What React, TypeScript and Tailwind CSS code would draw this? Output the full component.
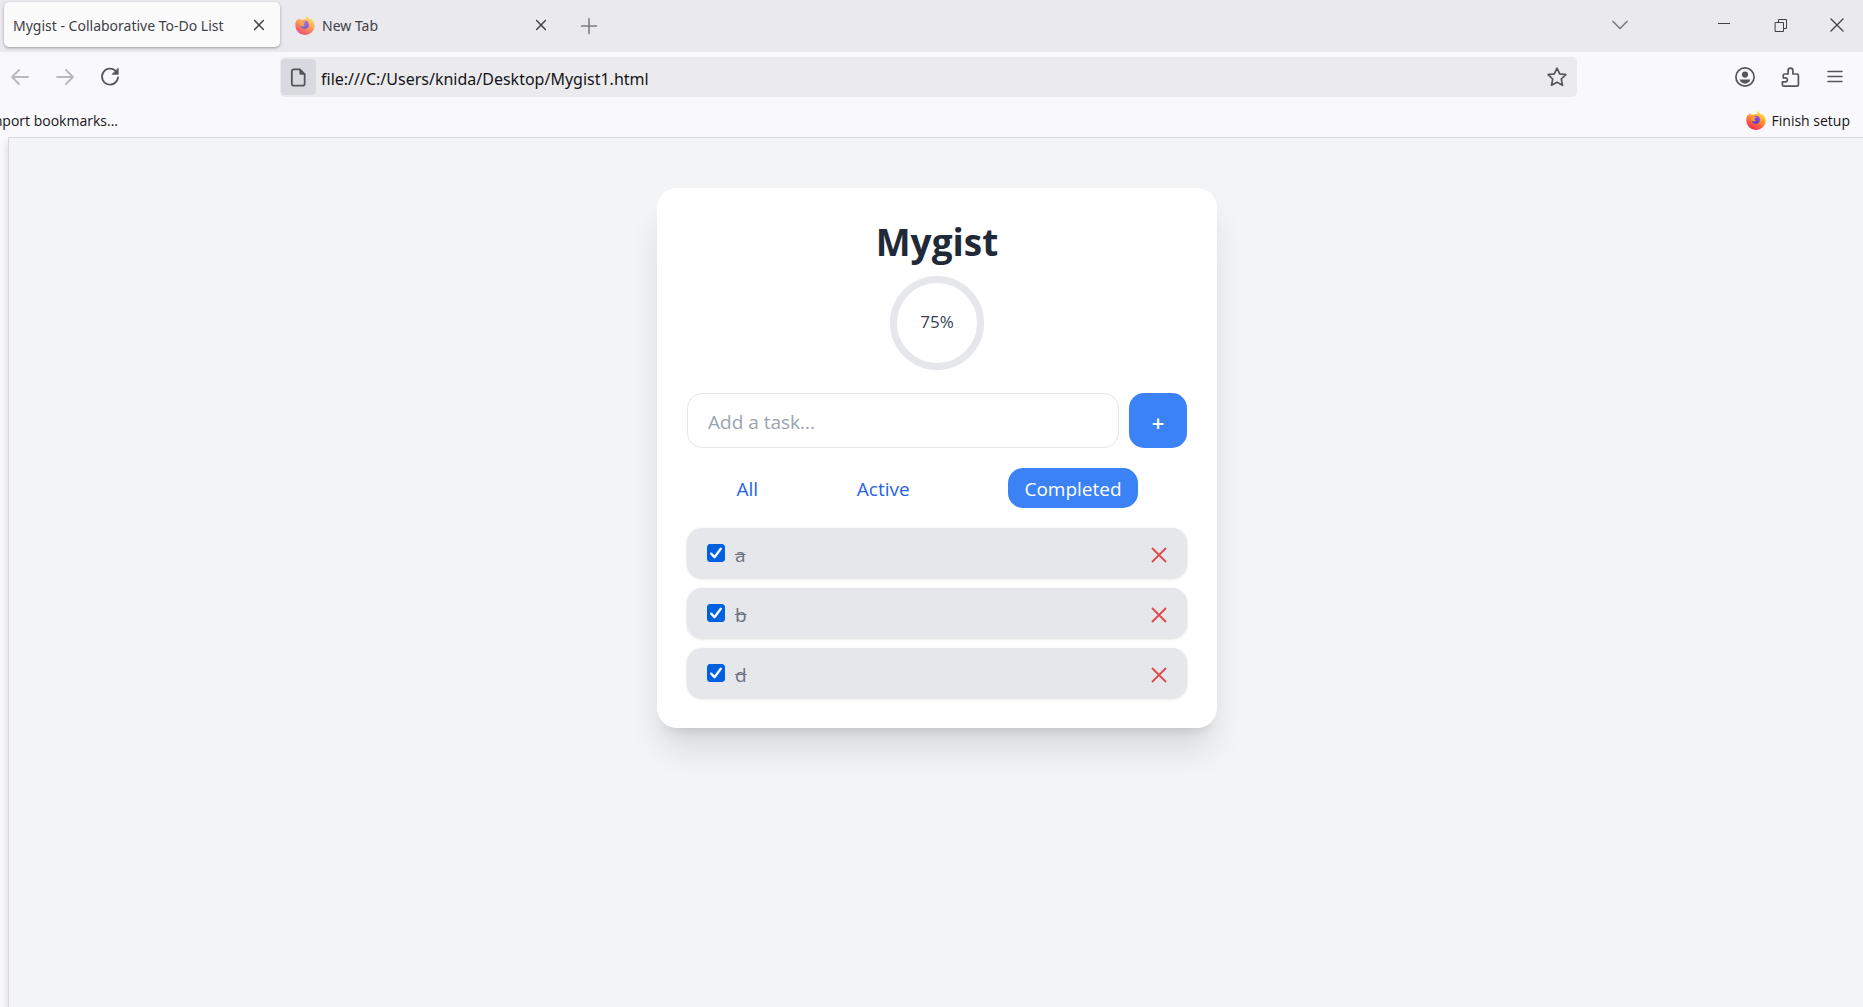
import React, { useState } from 'react';

type Filter = 'All' | 'Active' | 'Completed';

interface Task {
  id: number;
  text: string;
  done: boolean;
}

const initialTasks: Task[] = [
  { id: 1, text: 'a', done: true },
  { id: 2, text: 'b', done: true },
  { id: 3, text: 'c', done: false },
  { id: 4, text: 'd', done: true },
];

const filters: Filter[] = ['All', 'Active', 'Completed'];

interface IconProps {
  children: React.ReactNode;
  className?: string;
  size?: number;
  stroke?: number;
}

const Icon: React.FC<IconProps> = ({ children, className = '', size = 20, stroke = 1.6 }) => (
  <svg
    width={size}
    height={size}
    viewBox="0 0 20 20"
    fill="none"
    stroke="currentColor"
    strokeWidth={stroke}
    strokeLinecap="round"
    strokeLinejoin="round"
    className={`shrink-0 ${className}`}
    aria-hidden="true"
  >
    {children}
  </svg>
);

const FirefoxLogo: React.FC<{ id: string; className?: string }> = ({ id, className = '' }) => (
  <svg width="20" height="20" viewBox="0 0 20 20" className={`shrink-0 ${className}`} aria-hidden="true">
    <defs>
      <linearGradient id={`${id}-flame`} x1="0.8" y1="0" x2="0.3" y2="1">
        <stop offset="0" stopColor="#fff44f" />
        <stop offset="0.35" stopColor="#ffb02e" />
        <stop offset="0.65" stopColor="#ff6a3c" />
        <stop offset="1" stopColor="#f0245e" />
      </linearGradient>
      <linearGradient id={`${id}-globe`} x1="0.7" y1="0" x2="0.4" y2="1">
        <stop offset="0" stopColor="#a34bf0" />
        <stop offset="1" stopColor="#4f3cc4" />
      </linearGradient>
    </defs>
    <path
      d="M12.6 0.2c-.5 1.4.2 2.5 1.3 3.5.7.6 1.3 1 1.6 1.6 0-.7-.1-1.3-.3-1.8 2.7 1.5 4.5 4.3 4.5 7.2A9.6 9.3 0 0 1 10 20 9.7 9.5 0 0 1 .3 10.4C.3 8 1 5.7 2.2 4.2c.1.5.2.8.4 1.1.4-.9 1-1.7 1.8-2.3 0 .7.1 1.2.4 1.6 1-.2 1.9-.1 2.7.4 1.3-.9 2.6-1 3.6-.8-.1-1.7.4-3.1 1.5-4z"
      fill={`url(#${id}-flame)`}
    />
    <circle cx="9.8" cy="9.8" r="4.1" fill={`url(#${id}-globe)`} />
    <path
      d="M4.2 6.200c1.500-.7 3-.5 4.100.4.8.2 1.900.2 2.200.5 0 .9-1.700 1.300-2 1.900.2 1 .6 1.500 1.800 1.600-1.100 1.200-2.900 1.200-4.300.1-1.200-1.100-2-2.700-1.800-4.500z"
      fill="#ff9a2e"
    />
  </svg>
);

const CloseIcon: React.FC = () => (
  <Icon size={16} stroke={1.8}>
    <path d="M4.500 4.500l11 11M15.500 4.500l-11 11" />
  </Icon>
);

const TabBar: React.FC = () => (
  <div className="flex h-[52px] items-center bg-[#eae9ee] pl-1 text-[#3f3f46]">
    <div className="mb-[3px] flex h-[45px] w-[276px] items-center justify-between rounded-[5px] bg-[#fbfbfb] pl-[9px] pr-[13px] shadow-[0_1px_3px_rgba(0,0,0,0.35)]">
      <span className="pt-0.5 font-['Noto_Sans',sans-serif] text-sm whitespace-nowrap">
        Mygist - Collaborative To-Do List
      </span>
      <button type="button" aria-label="Close tab">
        <CloseIcon />
      </button>
    </div>
    <div className="mb-[3px] ml-[15px] flex w-[254px] items-center">
      <FirefoxLogo id="tab" className="opacity-80" />
      <span className="ml-[7px] flex-1 pt-0.5 font-['Noto_Sans',sans-serif] text-sm">New Tab</span>
      <button type="button" aria-label="Close tab">
        <CloseIcon />
      </button>
    </div>
    <button type="button" aria-label="Open a new tab" className="ml-[30px] text-[#7a7a80]">
      <Icon stroke={1.5}>
        <path d="M10 2.5v15M2.5 10h15" />
      </Icon>
    </button>
    <div className="mb-[3px] ml-auto flex items-center pr-4">
      <button type="button" aria-label="List all tabs" className="mr-[84px] text-[#7a7a80]">
        <Icon>
          <path d="M3 6.5l7 7 7-7" />
        </Icon>
      </button>
      <button type="button" aria-label="Minimize" className="mb-1 mr-[37px]">
        <Icon stroke={1}>
          <path d="M4 10.5h12" strokeLinecap="butt" />
        </Icon>
      </button>
      <button type="button" aria-label="Restore" className="mr-9">
        <Icon stroke={1}>
          <path d="M4.5 7.5h8v9h-8zM7.5 7.5v-3h8v9h-3" strokeLinejoin="miter" />
        </Icon>
      </button>
      <button type="button" aria-label="Close window">
        <Icon stroke={1.3}>
          <path d="M4 4l12 12M16 4L4 16" />
        </Icon>
      </button>
    </div>
  </div>
);

const AddressBar: React.FC = () => (
  <div className="flex h-[50px] items-center bg-[#f9f9fb] pl-[10px] pr-[18px] text-[#55555c]">
    <div className="flex w-[270px] items-center gap-[25px]">
      <button type="button" aria-label="Back" className="text-[#b9b9bd]">
        <Icon stroke={1.8}>
          <path d="M18 10H2M9 3l-7 7 7 7" />
        </Icon>
      </button>
      <button type="button" aria-label="Forward" className="text-[#b9b9bd]">
        <Icon stroke={1.8}>
          <path d="M2 10h16M11 3l7 7-7 7" />
        </Icon>
      </button>
      <button type="button" aria-label="Reload">
        <Icon stroke={1.8}>
          <path d="M15.5 3.8A8 8 0 1 0 18 10.5" />
          <path d="M18.2 1.5v5.8h-5.8z" fill="currentColor" strokeWidth="0.8" />
        </Icon>
      </button>
    </div>
    <div className="flex h-10 flex-1 items-center rounded-[5px] bg-[#ebebed] pl-px pr-[10px]">
      <button
        type="button"
        aria-label="Site information"
        className="flex h-9 w-[35px] items-center justify-center rounded-[4px] bg-[#d9dae0]"
      >
        <Icon size={19} stroke={1.9}>
          <path d="M5 1.5h6.500l5 5v10a2 2 0 0 1-2 2H5a2 2 0 0 1-2-2v-13a2 2 0 0 1 2-2z" />
          <path d="M11.500 1.500v5h5z" fill="currentColor" strokeWidth="1" />
        </Icon>
      </button>
      <input
        type="text"
        aria-label="Address"
        defaultValue="file:///C:/Users/knida/Desktop/Mygist1.html"
        className="ml-[5px] flex-1 bg-transparent pt-[3px] font-['Noto_Sans',sans-serif] text-base text-[#15141a] outline-none"
      />
      <button type="button" aria-label="Bookmark this page">
        <Icon stroke={1.7}>
          <path d="M10 1.2l2.7 5.7 6.2.8-4.6 4.3 1.2 6.3-5.5-3.1-5.5 3.1 1.2-6.3L1.1 7.7l6.2-.8z" />
        </Icon>
      </button>
    </div>
    <div className="ml-[158px] flex items-center gap-[25px]">
      <button type="button" aria-label="Account">
        <Icon stroke={1.7}>
          <circle cx="10" cy="10" r="9.1" />
          <circle cx="10" cy="7.6" r="3.1" fill="currentColor" stroke="none" />
          <path d="M4.6 12.6h10.8c-.7 2.600-2.900 4.100-5.400 4.100s-4.700-1.500-5.400-4.100z" fill="currentColor" stroke="none" />
        </Icon>
      </button>
      <button type="button" aria-label="Extensions">
        <Icon stroke={1.7}>
          <path d="M3.800 19.100h13.200a1.400 1.400 0 0 0 1.400-1.400V8.400A1.400 1.400 0 0 0 17 7h-4.100V3.600a2.400 2.400 0 0 0-4.800 0V7H4.600a1.400 1.400 0 0 0-1.400 1.400v2.400h2.100a2 2 0 0 1 0 4.100H2.400v2.800a1.400 1.400 0 0 0 1.400 1.400z" />
        </Icon>
      </button>
      <button type="button" aria-label="Open application menu">
        <Icon>
          <path d="M3 4.500h14M3 9.500h14M3 14.500h14" />
        </Icon>
      </button>
    </div>
  </div>
);

const BookmarksBar: React.FC = () => (
  <div className="flex h-[35px] items-center justify-between bg-[#f9f9fb] pr-[13px] text-sm text-[#15141a]">
    <a href="#import" className="flex w-[118px] justify-end overflow-hidden pt-0.5 whitespace-nowrap">
      Import bookmarks...
    </a>
    <a href="#setup" className="flex items-center gap-[6px]">
      <FirefoxLogo id="setup" />
      <span className="pt-0.5">Finish setup</span>
    </a>
  </div>
);

const ProgressRing: React.FC<{ percent: number }> = ({ percent }) => (
  <div className="mt-[10px] flex size-[100px] items-center justify-center self-center p-[3px]">
    <div className="flex size-full items-center justify-center rounded-full border-[7px] border-[#e5e7eb] pb-0.5 text-[17px] text-[#374151]">
      {percent}%
    </div>
  </div>
);

interface TaskRowProps {
  task: Task;
  onToggle: () => void;
  onRemove: () => void;
}

const TaskRow: React.FC<TaskRowProps> = ({ task, onToggle, onRemove }) => (
  <li
    className={`flex h-[50px] items-center justify-between rounded-[15px] px-5 shadow-[0_1px_3px_rgba(0,0,0,0.15)] ${
      task.done ? 'bg-[#e5e7eb]' : 'bg-[#f9fafb]'
    }`}
  >
    <label className="flex items-center gap-[10px]">
      <span className="grid">
        <input
          type="checkbox"
          checked={task.done}
          onChange={onToggle}
          className="col-start-1 row-start-1 size-[18px] appearance-none rounded-[3px] border border-[#8f8f9d] bg-white checked:border-[#0060df] checked:bg-[#0060df]"
        />
        {task.done && (
          <svg viewBox="0 0 18 18" className="pointer-events-none col-start-1 row-start-1 size-[18px]" aria-hidden="true">
            <path
              d="M4.2 9.600l3.300 3.600 6.300-8.400"
              fill="none"
              stroke="#fff"
              strokeWidth="2.3"
              strokeLinecap="round"
              strokeLinejoin="round"
            />
          </svg>
        )}
      </span>
      <span className={`pt-[3px] text-[19px] leading-[30px] ${task.done ? 'text-[#6b7280] line-through' : 'text-[#1f2937]'}`}>
        {task.text}
      </span>
    </label>
    <button type="button" onClick={onRemove} aria-label={`Delete ${task.text}`} className="pt-[3px] text-[#e5484a]">
      <svg width="16" height="16" viewBox="0 0 16 16" fill="none" stroke="currentColor" strokeWidth="1.8" aria-hidden="true">
        <path d="M1 1l14 14M15 1L1 15" />
      </svg>
    </button>
  </li>
);

const TodoCard: React.FC = () => {
  const [tasks, setTasks] = useState<Task[]>(initialTasks);
  const [filter, setFilter] = useState<Filter>('Completed');
  const [draft, setDraft] = useState('');

  const visible = tasks.filter((t) => filter === 'All' || (filter === 'Completed') === t.done);
  const percent = tasks.length ? Math.round((tasks.filter((t) => t.done).length / tasks.length) * 100) : 0;

  const addTask = (e: React.FormEvent) => {
    e.preventDefault();
    if (!draft.trim()) return;
    setTasks([...tasks, { id: Date.now(), text: draft.trim(), done: false }]);
    setDraft('');
  };

  return (
    <div className="flex w-full max-w-[560px] flex-col rounded-[20px] bg-white p-[30px] shadow-[0_25px_35px_-6px_rgba(0,0,0,0.12),0_10px_12px_-8px_rgba(0,0,0,0.12)]">
      <h1 className="pt-0.5 text-center text-[37px] leading-[43px] font-bold text-[#1f2937]">Mygist</h1>
      <ProgressRing percent={percent} />

      <form onSubmit={addTask} className="mt-5 flex h-[55px] gap-[10px]">
        <input
          type="text"
          aria-label="Add a task"
          placeholder="Add a task..."
          value={draft}
          onChange={(e) => setDraft(e.target.value)}
          className="min-w-0 flex-1 rounded-[15px] border border-[#e5e7eb] px-5 pt-[3px] text-[19px] outline-none placeholder:text-[#9ca3af]"
        />
        <button
          type="submit"
          aria-label="Add"
          className="w-[58px] rounded-[15px] bg-[#3b82f6] pt-[3px] text-[22px] font-semibold text-white"
        >
          +
        </button>
      </form>

      <div className="mt-5 flex justify-around">
        {filters.map((name) => (
          <button
            key={name}
            type="button"
            onClick={() => setFilter(name)}
            className={`h-10 pt-[3px] text-[19px] ${
              filter === name ? 'rounded-[15px] bg-[#3b82f6] px-4 text-white' : 'text-[#2563eb]'
            }`}
          >
            {name}
          </button>
        ))}
      </div>

      <ul className="mt-5 flex flex-col gap-[10px]">
        {visible.map((task) => (
          <TaskRow
            key={task.id}
            task={task}
            onToggle={() => setTasks(tasks.map((t) => (t.id === task.id ? { ...t, done: !t.done } : t)))}
            onRemove={() => setTasks(tasks.filter((t) => t.id !== task.id))}
          />
        ))}
      </ul>
    </div>
  );
};

const App: React.FC = () => (
  <div className="flex min-h-screen flex-col overflow-hidden bg-[#f9f9fb] font-['Open_Sans','Noto_Sans',sans-serif]">
    <header>
      <TabBar />
      <AddressBar />
      <BookmarksBar />
    </header>
    <main className="ml-2 flex flex-1 items-start justify-center border-t border-l border-[#d9d9dd] bg-[#f3f4f6] pt-[50px] pr-4 pb-12 pl-[18px] shadow-[-2px_6px_6px_rgba(0,0,0,0.1)]">
      <TodoCard />
    </main>
  </div>
);

export default App;
